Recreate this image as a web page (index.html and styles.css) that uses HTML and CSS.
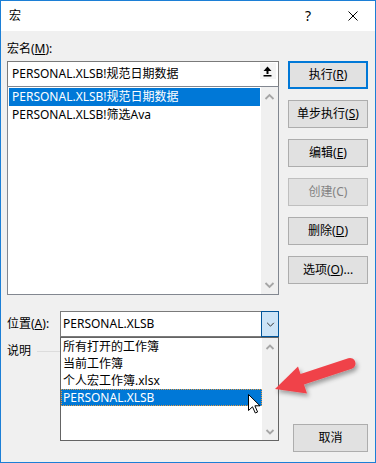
FILE: index.html
```html
<!DOCTYPE html>
<html lang="zh">
<head>
<meta charset="utf-8">
<title>宏</title>
<link rel="stylesheet" href="styles.css">
</head>
<body>
<div class="window">
  <div class="titlebar">
    <span class="title">宏</span>
    <span class="help">?</span>
    <svg class="close" viewBox="0 0 10 10"><path d="M0.5 0.5 L9.5 9.5 M9.5 0.5 L0.5 9.5" stroke="#000" stroke-width="1"/></svg>
  </div>
  <div class="content">
    <div class="top">
      <div class="left">
        <div class="name-label">宏名(<u>M</u>):</div>
        <div class="edit">
          <span class="edit-text">PERSONAL.XLSB!规范日期数据</span>
          <span class="collapse"><svg viewBox="0 0 16 16"><path d="M3.5 8 L7.5 3.5 L11.5 8 Z M6.5 8 h2 v3 h-2 Z M3.5 12 h8 v1.5 h-8 Z" fill="#000"/></svg></span>
        </div>
        <div class="list">
          <div class="items">
            <div class="item sel">PERSONAL.XLSB!规范日期数据</div>
            <div class="item">PERSONAL.XLSB!筛选Ava</div>
          </div>
          <div class="vscroll">
            <svg viewBox="0 0 17 17"><polyline points="4.5,12 8.5,8 12.5,12" fill="none" stroke="#a6a6a6" stroke-width="1.8"/></svg>
            <svg viewBox="0 0 17 17"><polyline points="4.5,6 8.5,10 12.5,6" fill="none" stroke="#a6a6a6" stroke-width="1.8"/></svg>
          </div>
        </div>
      </div>
      <div class="right">
        <button class="btn default">执行(<u>R</u>)</button>
        <button class="btn">单步执行(<u>S</u>)</button>
        <button class="btn">编辑(<u>E</u>)</button>
        <button class="btn disabled">创建(C)</button>
        <button class="btn">删除(<u>D</u>)</button>
        <button class="btn">选项(<u>O</u>)...</button>
      </div>
    </div>
    <div class="loc-row">
      <div class="loc-label">位置(<u>A</u>):</div>
      <div class="combo">
        <span class="combo-field">PERSONAL.XLSB</span>
        <span class="combo-btn"><svg viewBox="0 0 10 6"><polyline points="1,1 5,5 9,1" fill="none" stroke="#333" stroke-width="1.2"/></svg></span>
        <div class="dropdown">
          <div class="dd-items">
            <div class="dd-item">所有打开的工作簿</div>
            <div class="dd-item">当前工作簿</div>
            <div class="dd-item">个人宏工作簿.xlsx</div>
            <div class="dd-item sel">PERSONAL.XLSB</div>
          </div>
          <div class="dd-scroll">
            <svg viewBox="0 0 16 17"><polyline points="4.5,11 8,7.5 11.5,11" fill="none" stroke="#a6a6a6" stroke-width="1.8"/></svg>
            <svg viewBox="0 0 16 17"><polyline points="4.5,7 8,10.5 11.5,7" fill="none" stroke="#a6a6a6" stroke-width="1.8"/></svg>
          </div>
        </div>
      </div>
    </div>
    <div class="desc-row"><span class="desc-label">说明</span><span class="rule"></span></div>
    <div class="footer"><button class="btn cancel">取消</button></div>
  </div>
</div>
<svg class="overlay" viewBox="0 0 376 463" width="376" height="463">
  <defs>
    <filter id="sh" x="-30%" y="-50%" width="160%" height="200%">
      <feDropShadow dx="2" dy="3" stdDeviation="2" flood-color="#000" flood-opacity="0.35"/>
    </filter>
  </defs>
  <g filter="url(#sh)">
    <line x1="300" y1="380" x2="350" y2="363.5" stroke="#f0434a" stroke-width="11" stroke-linecap="round"/>
    <polygon points="275,389 298,366.5 307,393.5" fill="#f0434a"/>
  </g>
  <path d="M248.5 394.5 V410.5 L252.5 406.8 L255.3 413 L257.6 412 L254.9 405.8 L260 405.8 Z" fill="#fff" stroke="#000" stroke-width="1" stroke-linejoin="miter"/>
</svg>
</body>
</html>
```
FILE: styles.css
```css
html, body {
  margin: 0;
  padding: 0;
}
body {
  width: 376px;
  height: 463px;
  overflow: hidden;
  position: relative;
  background: #f0f0f0;
  color: #000;
  font-family: "Noto Sans", "Noto Sans CJK SC", sans-serif;
  font-size: 12px;
  line-height: 16px;
}
u {
  text-decoration: underline;
  text-underline-offset: 1px;
}
.window {
  box-sizing: border-box;
  width: 376px;
  height: 463px;
  border: 1px solid #1c7fd6;
  background: #f0f0f0;
  display: flex;
  flex-direction: column;
}
.titlebar {
  flex: none;
  height: 30px;
  background: #fff;
  display: flex;
  align-items: center;
  padding-left: 8px;
}
.title {
  flex: 1;
}
.help {
  width: 12px;
  text-align: center;
  font-size: 14px;
  margin-right: 34px;
}
.close {
  width: 10px;
  height: 10px;
  display: block;
  margin-right: 17px;
}
.content {
  flex: 1;
  display: flex;
  flex-direction: column;
  padding: 0 7px 10px 6px;
}
.top {
  display: flex;
  gap: 9px;
}
.left {
  width: 272px;
  display: flex;
  flex-direction: column;
}
.name-label {
  box-sizing: border-box;
  height: 30px;
  padding-top: 10px;
}
.edit {
  box-sizing: border-box;
  height: 25px;
  border: 1px solid #7a7a7a;
  border-bottom: none;
  background: #fff;
  display: flex;
  align-items: center;
  padding-left: 4px;
}
.edit-text {
  flex: 1;
  white-space: nowrap;
}
.collapse {
  align-self: flex-start;
  width: 16px;
  height: 16px;
  margin-top: 1px;
  margin-right: 2px;
  background: #f4f4f4;
}
.collapse svg {
  display: block;
  width: 16px;
  height: 16px;
}
.list {
  box-sizing: border-box;
  height: 209px;
  border: 1px solid #828790;
  background: #fff;
  display: flex;
}
.items {
  flex: 1;
  padding: 1px;
}
.item {
  height: 18px;
  line-height: 18px;
  padding-left: 3px;
  white-space: nowrap;
}
.item.sel,
.dd-item.sel {
  background: #0078d7;
  color: #fff;
}
.vscroll {
  width: 17px;
  background: #f0f0f0;
  display: flex;
  flex-direction: column;
  justify-content: space-between;
}
.vscroll svg {
  display: block;
  width: 17px;
  height: 17px;
}
.right {
  width: 80px;
  padding-top: 30px;
  display: flex;
  flex-direction: column;
  gap: 11px;
}
.btn {
  box-sizing: border-box;
  height: 28px;
  margin: 0;
  padding: 0;
  border: 1px solid #adadad;
  background: #e1e1e1;
  color: #000;
  font: inherit;
  display: flex;
  align-items: center;
  justify-content: center;
  white-space: nowrap;
}
.btn.default {
  border: 2px solid #0078d7;
}
.btn.disabled {
  color: #838383;
  border-color: #bfbfbf;
}
.loc-row {
  display: flex;
  margin-top: 16px;
  height: 26px;
}
.loc-label {
  width: 53px;
  line-height: 26px;
}
.combo {
  width: 219px;
  display: flex;
  position: relative;
}
.combo-field {
  flex: 1;
  border: 1px solid #7a7a7a;
  border-right: none;
  background: #fff;
  padding-left: 2px;
  line-height: 24px;
}
.combo-btn {
  box-sizing: border-box;
  width: 18px;
  border: 1px solid #005499;
  background: #cce4f7;
  display: flex;
  align-items: center;
  justify-content: center;
}
.combo-btn svg {
  display: block;
  width: 9px;
  height: 5px;
}
.dropdown {
  position: absolute;
  top: 26px;
  left: 0;
  z-index: 2;
  box-sizing: border-box;
  width: 219px;
  height: 104px;
  border: 1px solid #646464;
  background: #fff;
  display: flex;
}
.dd-items {
  flex: 1;
}
.dd-item {
  height: 17px;
  line-height: 17px;
  padding-left: 2px;
  white-space: nowrap;
}
.dd-item.sel {
  outline: 1px dotted #e39b45;
  outline-offset: -1px;
}
.dd-scroll {
  width: 16px;
  background: #f0f0f0;
  display: flex;
  flex-direction: column;
  justify-content: space-between;
}
.dd-scroll svg {
  display: block;
  width: 16px;
  height: 17px;
}
.desc-row {
  display: flex;
  align-items: center;
  margin-top: 7px;
  height: 14px;
}
.rule {
  width: 24px;
  height: 1px;
  margin-left: 6px;
  background: #dcdcdc;
}
.footer {
  margin-top: auto;
  display: flex;
  justify-content: flex-end;
}
.btn.cancel {
  width: 75px;
}
.overlay {
  position: absolute;
  left: 0;
  top: 0;
  pointer-events: none;
  z-index: 5;
}
```
